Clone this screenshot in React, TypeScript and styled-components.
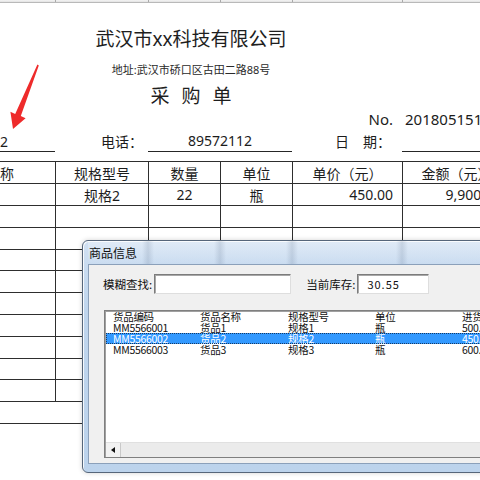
import React from "react";
import styled, { createGlobalStyle } from "styled-components";

const GlobalStyle = createGlobalStyle`
  html, body { margin: 0; padding: 0; background: #fff; }
  body { font-family: "Noto Sans", "Noto Sans CJK SC", sans-serif; }
`;

// spreadsheet columns, first one starts off-screen (-55px)
const COLS = "110px 93px 72px 72px 110px 108px";

const Page = styled.div`
  position: relative;
  width: 480px;
  height: 480px;
  overflow: hidden;
  background: #fff;
  color: #1c1c1c;
`;

const SheetGrid = styled.div<{ $h?: number }>`
  display: grid;
  grid-template-columns: ${COLS};
  margin-left: -55px;
  width: 565px;
  height: ${({ $h }) => ($h ? `${$h}px` : "auto")};
  box-sizing: border-box;
`;

const Strip = styled(SheetGrid)`
  background: linear-gradient(#f4f4f4, #e2e2e2);
  border-bottom: 1px solid #b9b9b9;
`;

const StripCell = styled.div<{ $line?: boolean }>`
  border-left: ${({ $line }) => ($line ? "1px solid #a9a9a9" : "none")};
`;

const Heading = styled.div`
  width: 382px;
  text-align: center;
  font-family: "Noto Sans", "Noto Sans CJK SC", sans-serif;
`;

const Company = styled.div`
  margin-top: 25px;
  height: 22px;
  line-height: 22px;
  font-size: 19px;
  color: #1e1e1e;
`;

const Address = styled.div`
  margin-top: 12px;
  height: 16px;
  line-height: 16px;
  font-size: 11px;
  color: #2a2a2a;
`;

const FormTitle = styled.div`
  margin-top: 6px;
  height: 24px;
  line-height: 24px;
  font-size: 19px;
  letter-spacing: 12px;
  padding-left: 12px;
  color: #1e1e1e;
`;

const Cell = styled.div<{
  $align?: "left" | "center" | "right";
  $pad?: number;
  $line?: boolean;
  $under?: boolean;
  $span?: number;
  $size?: number;
}>`
  display: flex;
  align-items: center;
  justify-content: ${({ $align }) =>
    $align === "left" ? "flex-start" : $align === "right" ? "flex-end" : "center"};
  padding: 0 ${({ $pad, $align }) => ($align === "right" ? `${$pad ?? 0}px` : "0")} 0
    ${({ $pad, $align }) => ($align === "left" ? `${$pad ?? 0}px` : "0")};
  grid-column: ${({ $span }) => ($span ? `span ${$span}` : "auto")};
  border-left: ${({ $line }) => ($line ? "1px solid #2e2e2e" : "none")};
  border-bottom: ${({ $under }) => ($under ? "1px solid #262626" : "none")};
  font-size: ${({ $size }) => $size ?? 14}px;
  white-space: nowrap;
  overflow: hidden;
  box-sizing: border-box;
  min-width: 0;
`;

const Table = styled.div`
  margin-top: 9px;
  border-top: 1px solid #2e2e2e;
  margin-left: -55px;
  width: 565px;
`;

const TableRow = styled.div<{ $h: number }>`
  display: grid;
  grid-template-columns: ${COLS};
  height: ${({ $h }) => $h}px;
  border-bottom: 1px solid #2e2e2e;
  box-sizing: border-box;
`;

const Arrow = styled.svg`
  position: absolute;
  left: 0;
  top: 0;
  width: 50px;
  height: 135px;
`;

/* ---------- dialog ---------- */

const Dialog = styled.div`
  position: absolute;
  left: 82px;
  top: 240px;
  width: 430px;
  height: 233px;
  box-sizing: border-box;
  display: flex;
  flex-direction: column;
  padding: 0 5px 8px 5px;
  border: 1px solid #56667a;
  border-radius: 6px;
  background: linear-gradient(180deg, #d0e0f2 0%, #bfd5ed 30%, #bcd3ec 100%);
  box-shadow: inset 1px 1px 0 rgba(255, 255, 255, 0.85), 0 0 5px rgba(0, 0, 0, 0.18);
`;

const TitleBar = styled.div`
  height: 23px;
  display: flex;
  align-items: center;
  padding-left: 1px;
  font-family: "Noto Sans CJK SC", sans-serif;
  font-size: 12px;
  color: #111;
  background:
    linear-gradient(90deg,
      transparent 54px, rgba(70, 90, 120, 0.16) 60px, transparent 66px,
      transparent 126px, rgba(70, 90, 120, 0.16) 132px, transparent 138px,
      transparent 198px, rgba(70, 90, 120, 0.16) 204px, transparent 210px,
      transparent 308px, rgba(70, 90, 120, 0.16) 314px, transparent 320px),
    linear-gradient(180deg, rgba(255, 255, 255, 0.35), rgba(255, 255, 255, 0));
`;

const Client = styled.div`
  flex: 1;
  min-height: 0;
  border: 1px solid #8ba0ba;
  background: #f0f0f0;
  padding: 8px 0 0 14px;
  display: flex;
  flex-direction: column;
  font-family: "Noto Sans CJK SC", sans-serif;
`;

const SearchRow = styled.div`
  display: flex;
  align-items: center;
  height: 22px;
  font-size: 11.5px;
  color: #111;
`;

const Label = styled.span<{ $gap?: number }>`
  margin-left: ${({ $gap }) => $gap ?? 0}px;
  margin-right: 2px;
`;

const Field = styled.div<{ $w: number }>`
  width: ${({ $w }) => $w}px;
  height: 20px;
  box-sizing: border-box;
  background: #fff;
  border: 1px solid;
  border-color: #7c7c7c #dedede #dedede #7c7c7c;
  box-shadow: inset 1px 1px 0 #a8a8a8;
  display: flex;
  align-items: center;
  padding-left: 9px;
  font-size: 11px;
  letter-spacing: 1px;
  color: #111;
`;

const ListBox = styled.div`
  margin-top: 15px;
  margin-left: 1px;
  width: 420px;
  height: 148px;
  box-sizing: border-box;
  border: 1px solid #7f7f7f;
  box-shadow: inset 1px 1px 0 #a0a0a0;
  background: #fff;
  display: flex;
  flex-direction: column;
`;

const ListBody = styled.div`
  flex: 1;
  padding-left: 1px;
`;

const ListRow = styled.div<{ $selected?: boolean }>`
  display: grid;
  grid-template-columns: 87px 88px 87px 87px 87px;
  padding-left: 7px;
  height: 11px;
  line-height: 11px;
  font-size: 10.5px;
  letter-spacing: -0.3px;
  white-space: nowrap;
  color: ${({ $selected }) => ($selected ? "#fff" : "#111")};
  background: ${({ $selected }) => ($selected ? "#3399ff" : "transparent")};
  outline: ${({ $selected }) => ($selected ? "1px dotted #173a63" : "none")};
  outline-offset: -1px;
`;

const HScroll = styled.div`
  height: 15px;
  display: flex;
  background: #ebebeb;
  border-top: 1px solid #e0e0e0;
  margin-left: 1px;
  box-sizing: border-box;
`;

const ScrollBtn = styled.div`
  width: 14px;
  display: flex;
  align-items: center;
  justify-content: center;
  border-right: 1px solid #c9c9c9;
  background: #f2f2f2;
  &::before {
    content: "";
    border-style: solid;
    border-width: 3px 4px 3px 0;
    border-color: transparent #111 transparent transparent;
  }
`;

const header = ["名称", "规格型号", "数量", "单位", "单价（元）", "金额（元）"];
const rowHeights = [22, 22, 21, 22, 22, 22, 22, 21, 22];

const items = [
  ["货品编码", "货品名称", "规格型号", "单位", "进货价"],
  ["MM5566001", "货品1", "规格1", "瓶", "500.00"],
  ["MM5566002", "货品2", "规格2", "瓶", "450.00"],
  ["MM5566003", "货品3", "规格3", "瓶", "600.00"],
];

export default function App() {
  return (
    <Page>
      <GlobalStyle />
      <Strip $h={3}>
        {header.map((_, i) => (
          <StripCell key={i} $line={i > 0} />
        ))}
      </Strip>

      <Heading>
        <Company>武汉市xx科技有限公司</Company>
        <Address>地址:武汉市硚口区古田二路88号</Address>
        <FormTitle>采购单</FormTitle>
      </Heading>

      <SheetGrid $h={22}>
        <Cell />
        <Cell />
        <Cell />
        <Cell />
        <Cell $align="right" $pad={9} $size={15}>No.</Cell>
        <Cell $align="left" $pad={3} $size={15}>201805151430</Cell>
      </SheetGrid>

      <SheetGrid $h={22}>
        <Cell $align="right" $pad={47} $under>供应商2</Cell>
        <Cell $align="right" $pad={5}>电话：</Cell>
        <Cell $span={2} $under>89572112</Cell>
        <Cell $align="right" $pad={11}>日　期：</Cell>
        <Cell $under />
      </SheetGrid>

      <Table>
        <TableRow $h={22}>
          {header.map((h, i) => (
            <Cell key={h} $line={i > 0}>{h}</Cell>
          ))}
        </TableRow>
        <TableRow $h={22}>
          <Cell />
          <Cell $line>规格2</Cell>
          <Cell $line>22</Cell>
          <Cell $line>瓶</Cell>
          <Cell $line $align="right" $pad={9}>450.00</Cell>
          <Cell $line $align="right" $pad={9}>9,900.00</Cell>
        </TableRow>
        {rowHeights.map((h, r) => (
          <TableRow key={r} $h={h}>
            {header.map((_, i) => (
              <Cell key={i} $line={i > 0} />
            ))}
          </TableRow>
        ))}
        <TableRow $h={22}>
          <Cell $span={6} />
        </TableRow>
      </Table>

      <Arrow viewBox="0 0 50 135">
        <polygon
          points="37.4,64.6 38.8,65.4 20.8,116.1 25.6,118.2 13,129 10.4,111.8 15.2,113.9"
          fill="#ee2b2b"
        />
      </Arrow>

      <Dialog>
        <TitleBar>商品信息</TitleBar>
        <Client>
          <SearchRow>
            <Label>模糊查找:</Label>
            <Field $w={137} />
            <Label $gap={15}>当前库存:</Label>
            <Field $w={72}>30.55</Field>
          </SearchRow>
          <ListBox>
            <ListBody>
              {items.map((row, r) => (
                <ListRow key={r} $selected={r === 2}>
                  {row.map((t, c) => (
                    <span key={c}>{t}</span>
                  ))}
                </ListRow>
              ))}
            </ListBody>
            <HScroll>
              <ScrollBtn />
            </HScroll>
          </ListBox>
        </Client>
      </Dialog>
    </Page>
  );
}
